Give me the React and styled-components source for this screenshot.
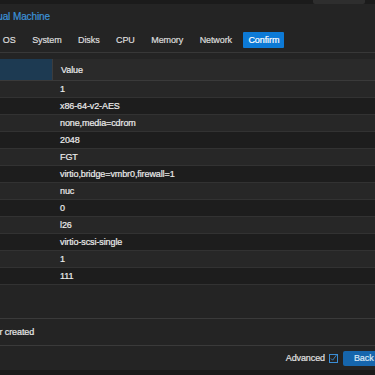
import React from "react";
import styled, { createGlobalStyle } from "styled-components";

const GlobalStyle = createGlobalStyle`
  html, body {
    margin: 0;
    padding: 0;
    background: #1b1b1b;
    overflow: hidden;
  }
  body {
    font-family: "Liberation Sans", Arial, sans-serif;
    font-size: 9px;
    letter-spacing: -0.1px;
    color: #e8e8e8;
    -webkit-text-stroke: 0.2px currentColor;
  }
`;

const Page = styled.div`
  width: 375px;
  height: 375px;
  overflow: hidden;
  display: flex;
  flex-direction: column;
  background: #1b1b1b;
`;

const TopStrip = styled.div`
  height: 4px;
  flex-shrink: 0;
  display: flex;
  justify-content: flex-end;
  overflow: hidden;
  padding-right: 10px;
`;

const GhostButton = styled.div`
  height: 18px;
  margin-top: -14px;
  padding: 0 6px;
  display: flex;
  align-items: center;
  gap: 4px;
  background: #2e2e2e;
  border-radius: 2px;
  color: #8a8a8a;
`;

const Window = styled.div`
  flex: 1;
  display: flex;
  flex-direction: column;
  background: #242424;
  overflow: hidden;
`;

const TitleBar = styled.div`
  height: 24px;
  flex-shrink: 0;
  display: flex;
  align-items: center;
`;

const Title = styled.span`
  margin-left: -52px;
  font-size: 10px;
  color: #3d93d9;
  white-space: nowrap;
`;

const TabBar = styled.div`
  height: 24px;
  flex-shrink: 0;
  display: flex;
  align-items: center;
  gap: 6.5px;
  margin-left: -50px;
  border-bottom: 1px solid #383838;
`;

const Tab = styled.div`
  height: 16px;
  padding: 0 5px;
  display: flex;
  align-items: center;
  border-radius: 1px;
  white-space: nowrap;
  color: ${(p) => (p.active ? "#ffffff" : "#dcdcdc")};
  background: ${(p) => (p.active ? "#0d7ad6" : "transparent")};
`;

const Body = styled.div`
  flex: 1;
  display: flex;
  flex-direction: column;
  padding-top: 6px;
`;

const Grid = styled.div`
  margin-left: -100px;
  display: flex;
  flex-direction: column;
`;

const HeaderRow = styled.div`
  height: 21px;
  display: flex;
  background: #2a2a2a;
  border-bottom: 1px solid #3a3a3a;
`;

const HeaderCell = styled.div`
  display: flex;
  align-items: center;
  padding-left: 8px;
  width: ${(p) => (p.wide ? "auto" : "144px")};
  flex: ${(p) => (p.wide ? 1 : "none")};
  background: ${(p) => (p.sorted ? "#1d3a52" : "transparent")};
  border-right: ${(p) => (p.sorted ? "1px solid #3c3c3c" : "none")};
  color: #ececec;
`;

const Row = styled.div`
  height: 16px;
  display: flex;
  align-items: center;
  background: ${(p) => (p.odd ? "#1d1d1d" : "#272727")};
  border-bottom: 1px solid #323232;
`;

const KeyCell = styled.div`
  width: 145px;
  padding-left: 8px;
  color: #ececec;
`;

const ValueCell = styled.div`
  padding-left: 7px;
  white-space: nowrap;
  color: #ececec;
`;

const Filler = styled.div`
  flex: 1;
  border-bottom: 1px solid #3a3a3a;
`;

const CheckRow = styled.div`
  height: 26px;
  flex-shrink: 0;
  display: flex;
  align-items: center;
  gap: 5px;
  margin-left: -50px;
  border-bottom: 1px solid #3a3a3a;
  white-space: nowrap;
`;

const Box = styled.div`
  width: 9px;
  height: 9px;
  box-sizing: border-box;
  border: 1px solid ${(p) => (p.checked ? "#3b8ed6" : "#555")};
  display: flex;
  align-items: center;
  justify-content: center;
`;

const Toolbar = styled.div`
  height: 24px;
  flex-shrink: 0;
  display: flex;
  align-items: center;
  justify-content: flex-end;
  margin-right: -68px;
  padding-right: 8px;
`;

const ToolLabel = styled.span`
  color: #e0e0e0;
  margin-right: 4px;
`;

const Button = styled.div`
  height: 15px;
  margin-left: 5px;
  padding: 0 11px;
  display: flex;
  align-items: center;
  border-radius: 2px;
  background: #1666ad;
  color: #dbe8f4;
  white-space: nowrap;
`;

const BottomStrip = styled.div`
  height: 5px;
  flex-shrink: 0;
  background: #1a1a1a;
`;

const rows = [
  ["cores", "1"],
  ["cpu", "x86-64-v2-AES"],
  ["ide2", "none,media=cdrom"],
  ["memory", "2048"],
  ["name", "FGT"],
  ["net0", "virtio,bridge=vmbr0,firewall=1"],
  ["nodename", "nuc"],
  ["numa", "0"],
  ["ostype", "l26"],
  ["scsihw", "virtio-scsi-single"],
  ["sockets", "1"],
  ["vmid", "111"],
];

const tabs = ["General", "OS", "System", "Disks", "CPU", "Memory", "Network", "Confirm"];

const Check = () => (
  <svg width="8" height="8" viewBox="0 0 8 8">
    <path d="M1 4.5 L3 6.5 L7.5 0.5" stroke="#3b8ed6" strokeWidth="1" fill="none" />
  </svg>
);

const App = () => {
  return (
    <Page>
      <GlobalStyle />
      <TopStrip>
        <GhostButton>
          <span>⟲</span>
          <span>Reboot</span>
        </GhostButton>
      </TopStrip>
      <Window>
        <TitleBar>
          <Title>Create: Virtual Machine</Title>
        </TitleBar>
        <TabBar>
          {tabs.map((t) => (
            <Tab key={t} active={t === "Confirm"}>
              {t}
            </Tab>
          ))}
        </TabBar>
        <Body>
          <Grid>
            <HeaderRow>
              <HeaderCell sorted>Key</HeaderCell>
              <HeaderCell wide>Value</HeaderCell>
            </HeaderRow>
            {rows.map(([k, v], i) => (
              <Row key={k} odd={i % 2 === 1}>
                <KeyCell>{k}</KeyCell>
                <ValueCell>{v}</ValueCell>
              </Row>
            ))}
          </Grid>
          <Filler />
          <CheckRow>
            <Box />
            <span>Start after created</span>
          </CheckRow>
          <Toolbar>
            <ToolLabel>Advanced</ToolLabel>
            <Box checked>
              <Check />
            </Box>
            <Button>Back</Button>
            <Button>Finish</Button>
          </Toolbar>
        </Body>
      </Window>
      <BottomStrip />
    </Page>
  );
};

export default App;
